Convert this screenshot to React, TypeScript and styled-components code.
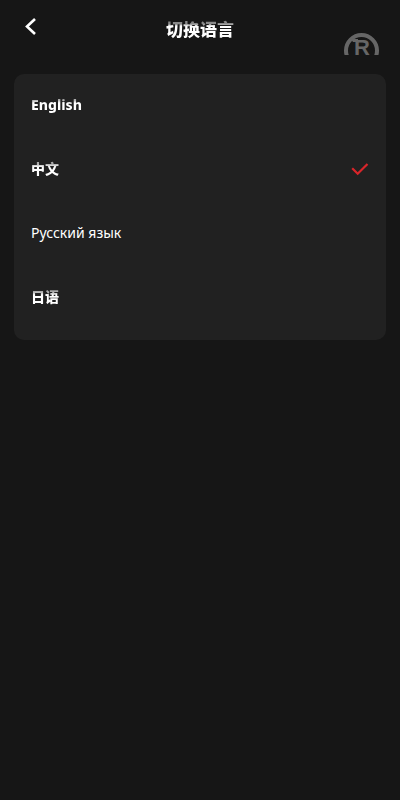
import React, { useState } from "react";
import styled, { createGlobalStyle } from "styled-components";

const GlobalStyle = createGlobalStyle`
  *, *::before, *::after { box-sizing: border-box; }
  body {
    margin: 0;
    background: #161616;
    color: #fff;
    font-family: "Noto Sans", "Noto Sans CJK SC", sans-serif;
  }
`;

const Page = styled.div`
  min-height: 100vh;
  background: #161616;
`;

const Header = styled.header`
  display: grid;
  grid-template-columns: 64px 1fr 64px;
  height: 55px;
  overflow: hidden;
`;

const BackButton = styled.button`
  display: flex;
  align-items: flex-start;
  padding: 16px 0 0 20px;
  border: 0;
  background: none;
  color: #fff;
  cursor: pointer;
`;

const Title = styled.h1`
  margin: 0;
  padding-top: 16px;
  font-family: "Noto Sans CJK SC", sans-serif;
  font-size: 17px;
  line-height: 26px;
  font-weight: 900;
  text-align: center;
  color: transparent;
  background: linear-gradient(#888 0 24px, #fff 26px);
  background-clip: text;
`;

const Emblem = styled.svg`
  display: block;
  margin: 32px 0 0 6px;
`;

const Card = styled.div`
  margin: 19px 14px 0;
  padding: 0 17px 10px;
  border-radius: 10px;
  background: #212121;
`;

const Option = styled.label`
  display: flex;
  align-items: center;
  justify-content: space-between;
  height: 64px;
  padding-bottom: 2px;
  cursor: pointer;
`;

const Radio = styled.input`
  appearance: none;
  width: 0;
  height: 0;
  margin: 0;
  order: 3;
`;

const Name = styled.span<{ $display: boolean }>`
  flex: 1;
  font-size: 14px;
  line-height: 20px;
  font-weight: ${(p) => (p.$display ? 800 : 400)};
  color: ${(p) => (p.$display ? "transparent" : "#fff")};
  background: ${(p) => (p.$display ? "linear-gradient(#aaa 0 5px, #fff 8px)" : "none")};
  background-clip: ${(p) => (p.$display ? "text" : "border-box")};
`;

const languages = [
  { id: "en", name: "English", display: true },
  { id: "zh", name: "中文", display: true },
  { id: "ru", name: "Русский язык", display: false },
  { id: "ja", name: "日语", display: true },
];

function Check() {
  return (
    <svg width="18" height="14" viewBox="0 0 18 14" fill="none" aria-hidden="true">
      <path d="M1.2 6.2 6.7 11.7 16.5 2" stroke="#d9252a" strokeWidth="2.2" />
    </svg>
  );
}

export default function App() {
  const [selected, setSelected] = useState("zh");
  return (
    <Page>
      <GlobalStyle />
      <Header>
        <BackButton type="button" aria-label="返回">
          <svg width="20" height="22" viewBox="0 0 20 22" fill="none">
            <path d="M15 3 7 10.5 15 18" stroke="currentColor" strokeWidth="2.6" />
          </svg>
        </BackButton>
        <Title>切换语言</Title>
        <Emblem width="38" height="38" viewBox="0 0 38 38" aria-hidden="true">
          <circle cx="19.5" cy="18.5" r="15.5" fill="none" stroke="#666" strokeWidth="4" />
          <path d="M9 7h7v3h-5z" fill="#666" />
          <text
            x="12"
            y="23"
            fill="#666"
            fontFamily="Liberation Sans, sans-serif"
            fontWeight="700"
            fontSize="22"
          >
            R
          </text>
        </Emblem>
      </Header>
      <main>
        <Card role="radiogroup" aria-label="切换语言">
          {languages.map((l) => (
            <Option key={l.id}>
              <Name $display={l.display}>{l.name}</Name>
              {selected === l.id && <Check />}
              <Radio
                type="radio"
                name="language"
                value={l.id}
                checked={selected === l.id}
                onChange={() => setSelected(l.id)}
              />
            </Option>
          ))}
        </Card>
      </main>
    </Page>
  );
}
